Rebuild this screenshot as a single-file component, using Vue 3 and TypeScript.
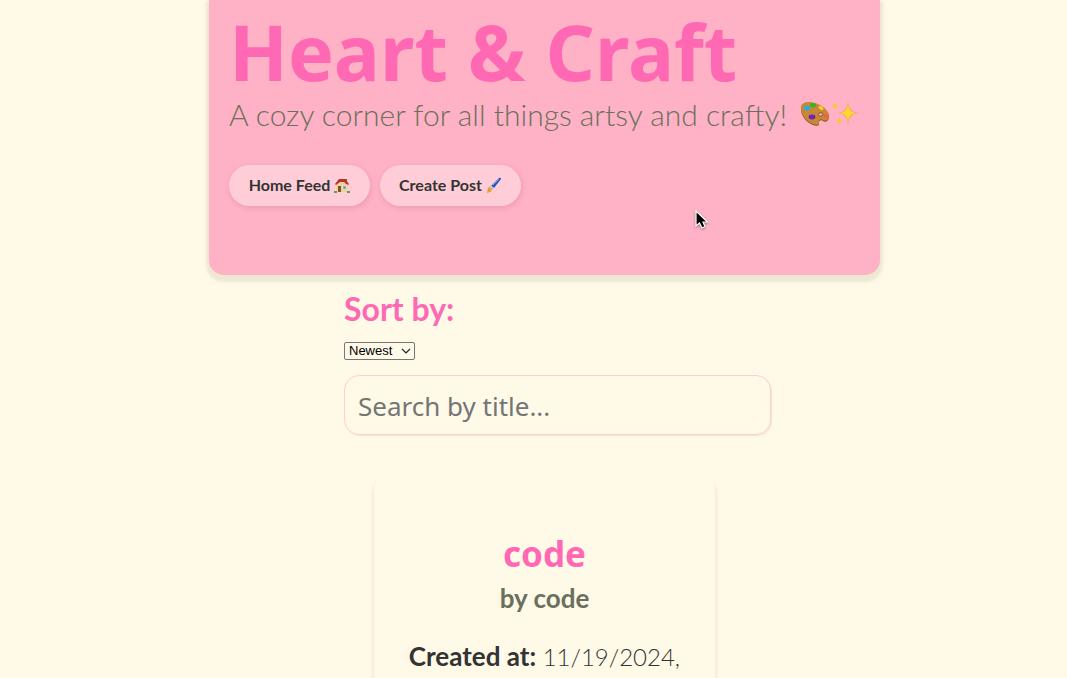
<script setup lang="ts">
import { ref } from 'vue'

interface Post {
  id: number
  title: string
  author: string
  createdAt: string
}

const sortBy = ref('newest')
const query = ref('')
const posts: Post[] = [{ id: 1, title: 'code', author: 'code', createdAt: '11/19/2024,' }]
</script>

<template>
  <div class="page">
    <header class="banner">
      <h1 class="brand">Heart &amp; Craft</h1>
      <p class="tagline">
        <span>A cozy corner for all things artsy and crafty!</span>
        <svg class="palette" viewBox="0 0 30 26" aria-hidden="true">
          <path d="M1 8C1 2 8 0 15 3c8 2 14 8 14 13 0 4-4 6-6 4-2-2-5 0-4 3 1 2-3 2-6 1C6 21 1 15 1 8Z" fill="#8b521c" />
          <path d="M1 7C1 1 8 0 15 2c8 2 14 8 14 13 0 4-4 6-6 4-2-2-5 0-4 3 1 2-3 2-6 1C6 20 1 14 1 7Z" fill="#c88736" />
          <ellipse cx="20.5" cy="13.5" rx="2.3" ry="1.7" fill="#fdb0c4" stroke="#8b521c" />
          <ellipse cx="7" cy="7" rx="3" ry="2.4" fill="#25aee4" />
          <ellipse cx="13" cy="4.2" rx="3" ry="2.2" fill="#32b51e" />
          <ellipse cx="21" cy="7" rx="2.7" ry="1.8" transform="rotate(30 21 7)" fill="#f6ce27" />
          <ellipse cx="26" cy="15" rx="2.2" ry="1.8" fill="#f45a51" />
          <ellipse cx="12" cy="16" rx="3.4" ry="2.4" fill="#7125b7" />
        </svg>
        <svg class="sparkles" viewBox="0 0 28 26" aria-hidden="true">
          <path d="M17 0c1 8 3 11 11 12-8 1-10 4-11 12-1-8-3-11-10-12 7-1 9-4 10-12Z" fill="#fba45f" />
          <path d="M17 3c1 6 2 8 8 9-6 1-7 3-8 9-1-6-2-8-8-9 6-1 7-3 8-9Z" fill="#fcdb2b" />
          <path d="M4 0c.5 3.500 1 4.500 4 5-3 .5-3.500 1.500-4 5-.5-3.500-1-4.500-4-5 3-.5 3.500-1.500 4-5ZM8.500 15c.5 3.500 1 4.500 3.500 5-2.500.5-3 1.500-3.500 5-.5-3.500-1-4.500-3.500-5 2.500-.5 3-1.500 3.500-5Z" fill="#fdc536" />
        </svg>
      </p>
      <nav class="nav">
        <a class="pill" href="#feed">
          Home Feed
          <svg viewBox="0 0 16 16" aria-hidden="true">
            <path d="M11 2h2v5h-2z" fill="#a64a38" />
            <path d="M2.500 8 8 3l5.500 5v7h-11z" fill="#ecd29b" />
            <path d="m1 7 4-5h6l4 5-1 1-4-3H6L2 8Z" fill="#b9302e" />
            <path d="M4 9h3v6H4z" fill="#85502c" />
            <path d="M9 9h3v3H9z" fill="#4b93bd" stroke="#f5f2e5" stroke-width=".5" />
            <path d="M0 14h3v2H0zM13 14h3v2h-3z" fill="#5aa733" />
          </svg>
        </a>
        <a class="pill" href="#create">
          Create Post
          <svg viewBox="0 0 16 16" aria-hidden="true">
            <path d="m5 9 8-8q2-1 2 1l-7 9Z" fill="#2453bd" />
            <path d="m7 8 6-6" stroke="#7aa3ed" />
            <path d="m5 8 3 3-2 2-3-3Z" fill="#c9bdb5" />
            <path d="m3 10 3 3c-1 2-3 2-5 3 1-3 0-4 2-6Z" fill="#ed9828" />
          </svg>
        </a>
      </nav>
      <svg class="pointer" viewBox="0 0 14 20" aria-hidden="true">
        <path d="M1 1v15l3.500-3 2.500 5 3-1.500L8 12h4.500Z" fill="#000" stroke="#fff" stroke-width="1.200" />
      </svg>
    </header>

    <main class="feed">
      <label class="sort-label" for="sort">Sort by:</label>
      <div class="sort-box">
        <select id="sort" v-model="sortBy">
          <option value="newest">Newest</option>
          <option value="popular">Most Popular</option>
        </select>
        <svg class="chevron" viewBox="0 0 10 6" aria-hidden="true">
          <path d="m1 1 4 4 4-4" fill="none" stroke="#222" stroke-width="1.200" />
        </svg>
      </div>
      <input v-model="query" class="search" type="text" placeholder="Search by title..." aria-label="Search by title" />
      <article v-for="post in posts" :key="post.id" class="card">
        <h2 class="card-title">{{ post.title }}</h2>
        <h3 class="card-author">by {{ post.author }}</h3>
        <p class="card-date"><strong>Created at:</strong> {{ post.createdAt }}</p>
      </article>
    </main>
  </div>
</template>

<style>
body {
  margin: 0;
  background: #fff9e8;
}
</style>

<style scoped>
.page {
  box-sizing: border-box;
  height: 100vh;
  overflow: hidden;
  padding-left: 22px;
  display: flex;
  flex-direction: column;
  align-items: center;
  font-family: Avenir, Lato, sans-serif;
  color: #333;
}
h1, h2, h3, p {
  margin: 0;
}
.banner {
  position: relative;
  box-sizing: border-box;
  flex: none;
  width: 671px;
  max-width: 100%;
  padding: 6px 20px 69px;
  border-radius: 0 0 15px 15px;
  background: #ffb1c5;
  box-shadow: 0 4px 3px 3px rgba(80, 80, 40, 0.1);
}
.brand {
  font: 700 77px/92px "Comic Sans MS", "Noto Sans", sans-serif;
  color: #ff69b4;
  white-space: nowrap;
}
.tagline {
  display: flex;
  align-items: center;
  height: 32px;
  font-size: 30px;
  font-weight: 300;
  line-height: 32px;
  color: #6b705c;
  white-space: nowrap;
}
.palette {
  width: 30px;
  height: 26px;
  margin-left: 13px;
}
.sparkles {
  width: 28px;
  height: 26px;
  margin-left: 1px;
}
.nav {
  display: flex;
  gap: 10px;
  margin-top: 35px;
}
.pill {
  box-sizing: border-box;
  display: flex;
  align-items: center;
  justify-content: center;
  gap: 4px;
  width: 141px;
  height: 41px;
  padding-bottom: 2px;
  border-radius: 21px;
  background: #ffcdd8;
  box-shadow: 1px 2px 4px 1px rgba(150, 70, 100, 0.14);
  font-size: 16px;
  font-weight: 700;
  color: #333;
  text-decoration: none;
  white-space: nowrap;
}
.pill svg {
  width: 16px;
  height: 16px;
}
.pointer {
  position: absolute;
  left: 486px;
  top: 210px;
  width: 14px;
  height: 20px;
  filter: drop-shadow(0 1px 1px rgba(0, 0, 0, 0.4));
}
.feed {
  width: 401px;
  max-width: 100%;
  display: flex;
  flex-direction: column;
  align-items: flex-start;
}
.sort-label {
  margin-top: 16px;
  font-size: 32px;
  font-weight: 700;
  line-height: 36px;
  color: #ff69b4;
}
.sort-box {
  position: relative;
  margin-top: 15px;
  height: 18px;
}
.sort-box select {
  appearance: none;
  display: block;
  box-sizing: border-box;
  width: 71px;
  height: 18px;
  padding: 0 4px;
  border: 1px solid #767676;
  border-radius: 2px;
  background: transparent;
  font: 13px/16px "Liberation Sans", Arial, sans-serif;
  color: #000;
}
.chevron {
  position: absolute;
  right: 4px;
  top: 6px;
  width: 10px;
  height: 6px;
  pointer-events: none;
}
.search {
  box-sizing: border-box;
  width: 427px;
  height: 60px;
  margin-top: 15px;
  padding: 1px 13px 0;
  border: 1px solid #ffccd7;
  border-radius: 15px;
  background: transparent;
  box-shadow: 1px 1px 1px rgba(80, 80, 40, 0.1);
  font: 400 26px "Comic Sans MS", "Noto Sans", sans-serif;
  color: #333;
}
.search::placeholder {
  color: #757575;
  opacity: 1;
}
.card {
  box-sizing: border-box;
  align-self: center;
  width: 341px;
  margin-top: 40px;
  padding: 56px 20px 60px;
  border-radius: 15px;
  background: #fff9e8;
  box-shadow: 0 4px 3px 2px rgba(80, 80, 40, 0.08);
  text-align: center;
}
.card-title {
  font: 700 35px/46px "Comic Sans MS", "Noto Sans", sans-serif;
  color: #ff69b4;
}
.card-author {
  margin-top: 1px;
  font-size: 26px;
  font-weight: 700;
  line-height: 40px;
  color: #6b705c;
}
.card-date {
  margin-top: 18px;
  font-size: 24px;
  font-weight: 300;
  line-height: 40px;
}
.card-date strong {
  font-size: 26px;
  font-weight: 700;
}
</style>
